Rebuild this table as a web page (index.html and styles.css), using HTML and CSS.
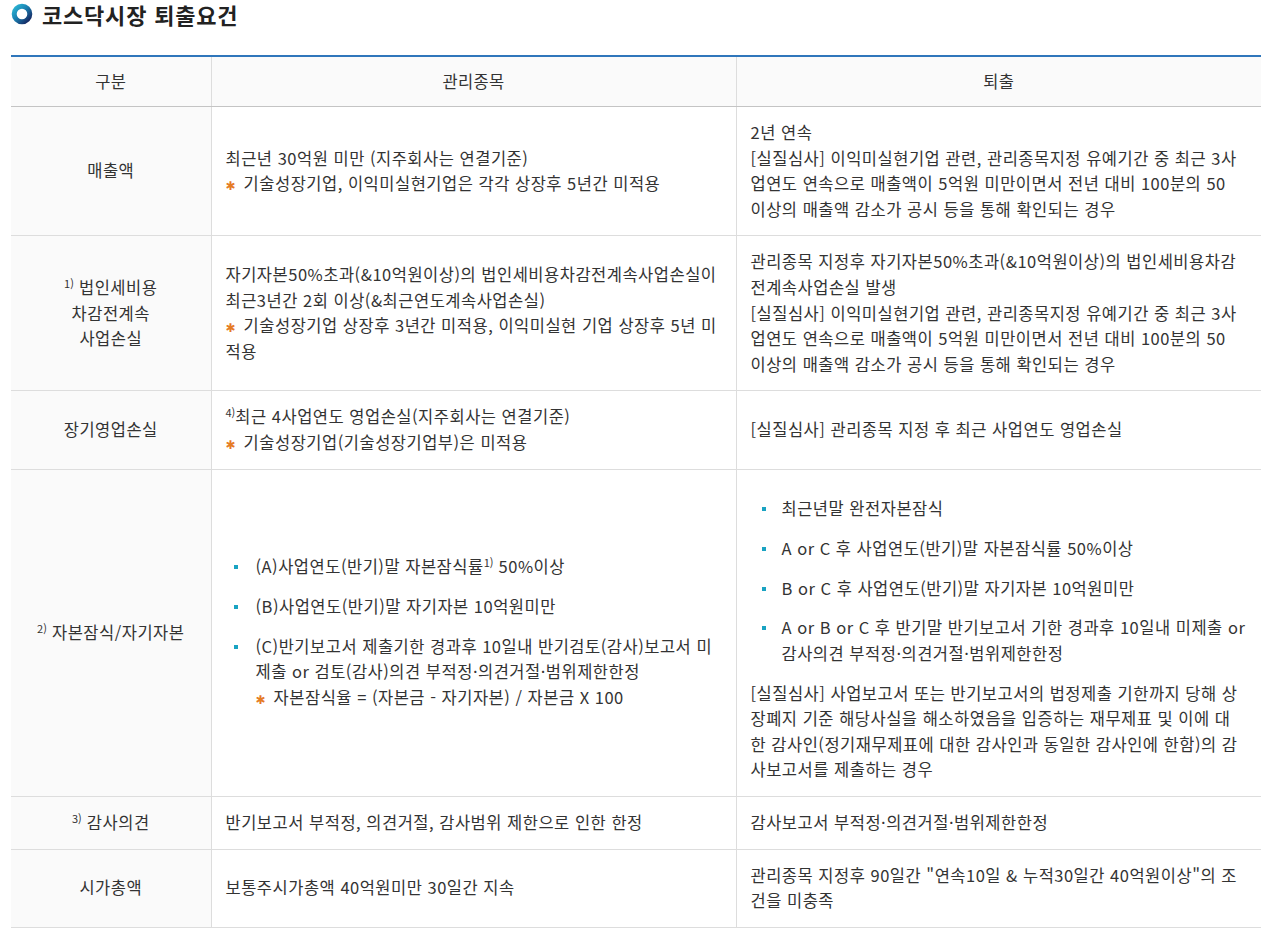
FILE: index.html
```html
<!DOCTYPE html>
<html lang="ko">
<head>
<meta charset="utf-8">
<link rel="stylesheet" href="styles.css">
</head>
<body>
<div class="page">
  <h2 class="title">
    <svg class="title-icon" width="22" height="22" viewBox="0 0 22 22">
      <defs>
        <linearGradient id="rg" x1="0" y1="0" x2="1" y2="1">
          <stop offset="0" stop-color="#2bb6d4"/>
          <stop offset="0.45" stop-color="#1a7fb0"/>
          <stop offset="1" stop-color="#15205c"/>
        </linearGradient>
      </defs>
      <circle cx="11" cy="11" r="7.8" fill="none" stroke="url(#rg)" stroke-width="5"/>
    </svg>
    <span>코스닥시장 퇴출요건</span>
  </h2>

  <table class="tbl">
    <colgroup>
      <col class="c1">
      <col class="c2">
      <col class="c3">
    </colgroup>
    <thead>
      <tr>
        <th>구분</th>
        <th>관리종목</th>
        <th>퇴출</th>
      </tr>
    </thead>
    <tbody>
      <tr>
        <td class="cat">매출액</td>
        <td>최근년 30억원 미만 (지주회사는 연결기준)<br><span class="ast">✱</span> 기술성장기업, 이익미실현기업은 각각 상장후 5년간 미적용</td>
        <td>2년 연속<br>[실질심사] 이익미실현기업 관련, 관리종목지정 유예기간 중 최근 3사<br>업연도 연속으로 매출액이 5억원 미만이면서 전년 대비 100분의 50<br>이상의 매출액 감소가 공시 등을 통해 확인되는 경우</td>
      </tr>
      <tr>
        <td class="cat"><sup>1)</sup> 법인세비용<br>차감전계속<br>사업손실</td>
        <td>자기자본50%초과(&amp;10억원이상)의 법인세비용차감전계속사업손실이<br>최근3년간 2회 이상(&amp;최근연도계속사업손실)<br><span class="ast">✱</span> 기술성장기업 상장후 3년간 미적용, 이익미실현 기업 상장후 5년 미<br>적용</td>
        <td>관리종목 지정후 자기자본50%초과(&amp;10억원이상)의 법인세비용차감<br>전계속사업손실 발생<br>[실질심사] 이익미실현기업 관련, 관리종목지정 유예기간 중 최근 3사<br>업연도 연속으로 매출액이 5억원 미만이면서 전년 대비 100분의 50<br>이상의 매출액 감소가 공시 등을 통해 확인되는 경우</td>
      </tr>
      <tr>
        <td class="cat">장기영업손실</td>
        <td><sup>4)</sup>최근 4사업연도 영업손실(지주회사는 연결기준)<br><span class="ast">✱</span> 기술성장기업(기술성장기업부)은 미적용</td>
        <td>[실질심사] 관리종목 지정 후 최근 사업연도 영업손실</td>
      </tr>
      <tr>
        <td class="cat"><sup>2)</sup> 자본잠식/자기자본</td>
        <td>
          <ul class="list list-mid">
            <li>(A)사업연도(반기)말 자본잠식률<sup>1)</sup> 50%이상</li>
            <li>(B)사업연도(반기)말 자기자본 10억원미만</li>
            <li>(C)반기보고서 제출기한 경과후 10일내 반기검토(감사)보고서 미<br>제출 or 검토(감사)의견 부적정·의견거절·범위제한한정<br><span class="ast">✱</span> 자본잠식율 = (자본금 - 자기자본) / 자본금 X 100</li>
          </ul>
        </td>
        <td>
          <ul class="list list-right">
            <li>최근년말 완전자본잠식</li>
            <li>A or C 후 사업연도(반기)말 자본잠식률 50%이상</li>
            <li>B or C 후 사업연도(반기)말 자기자본 10억원미만</li>
            <li>A or B or C 후 반기말 반기보고서 기한 경과후 10일내 미제출 or<br>감사의견 부적정·의견거절·범위제한한정</li>
          </ul>
          <p class="para">[실질심사] 사업보고서 또는 반기보고서의 법정제출 기한까지 당해 상<br>장폐지 기준 해당사실을 해소하였음을 입증하는 재무제표 및 이에 대<br>한 감사인(정기재무제표에 대한 감사인과 동일한 감사인에 한함)의 감<br>사보고서를 제출하는 경우</p>
        </td>
      </tr>
      <tr>
        <td class="cat"><sup>3)</sup> 감사의견</td>
        <td>반기보고서 부적정, 의견거절, 감사범위 제한으로 인한 한정</td>
        <td>감사보고서 부적정·의견거절·범위제한한정</td>
      </tr>
      <tr>
        <td class="cat">시가총액</td>
        <td>보통주시가총액 40억원미만 30일간 지속</td>
        <td>관리종목 지정후 90일간 "연속10일 &amp; 누적30일간 40억원이상"의 조<br>건을 미충족</td>
      </tr>
    </tbody>
  </table>
</div>
</body>
</html>
```

FILE: styles.css
```css
html, body {
  margin: 0;
  padding: 0;
  background: #ffffff;
}

body {
  font-family: "Noto Sans CJK KR", "Noto Sans", sans-serif;
  color: #333333;
  font-size: 16px;
}

.page {
  padding: 0 9px 0 11px;
}

.title {
  display: flex;
  align-items: center;
  gap: 9px;
  margin: 0;
  height: 25px;
  padding-top: 1px;
  font-size: 22px;
  font-weight: 700;
  color: #222222;
  letter-spacing: 0.8px;
}

.title-icon {
  flex: none;
  margin-left: 0;
}

.tbl {
  width: 1250px;
  margin-top: 29px;
  border-collapse: collapse;
  table-layout: fixed;
  border-top: 2px solid #2f76bb;
}

.c1 { width: 200px; }
.c2 { width: 525px; }
.c3 { width: 525px; }

.tbl th {
  background: #fafafa;
  font-weight: 400;
  font-size: 16.5px;
  line-height: 26px;
  padding: 11px 13px 12px;
  border-bottom: 1px solid #c4c4c4;
  border-left: 1px solid #dddddd;
  text-align: center;
  color: #333333;
  letter-spacing: 0.3px;
}

.tbl th:first-child,
.tbl td:first-child {
  border-left: none;
}

.tbl td {
  font-size: 16.5px;
  line-height: 25.6px;
  padding: 13px 5px 13px 14px;
  border-bottom: 1px solid #dddddd;
  border-left: 1px solid #dddddd;
  vertical-align: middle;
  text-align: left;
  letter-spacing: 0.5px;
}

.tbl td.cat {
  background: #fafafa;
  text-align: center;
  padding-left: 8px;
  padding-right: 8px;
}

sup {
  font-size: 11px;
  line-height: 0;
  vertical-align: 6px;
  letter-spacing: 0;
}

.ast {
  color: #e57b25;
  font-size: 12px;
  line-height: 10px;
  height: 10px;
  font-family: "DejaVu Sans", sans-serif;
  display: inline-block;
  width: 13px;
  vertical-align: 0;
  letter-spacing: 0;
}

.list {
  list-style: none;
  margin: 13px 0 14px;
  padding: 0;
}

.list li {
  position: relative;
}

.list li + li {
  margin-top: 14.4px;
}

.list li::before {
  content: "";
  position: absolute;
  top: 11px;
  width: 4px;
  height: 4px;
  background: #19a3c2;
}

.list-mid {
  padding-left: 30px;
}

.list-mid li::before {
  left: -22px;
}

.list-right {
  padding-left: 31px;
}

.list-right li::before {
  left: -20px;
}

.para {
  margin: 0;
}
```
